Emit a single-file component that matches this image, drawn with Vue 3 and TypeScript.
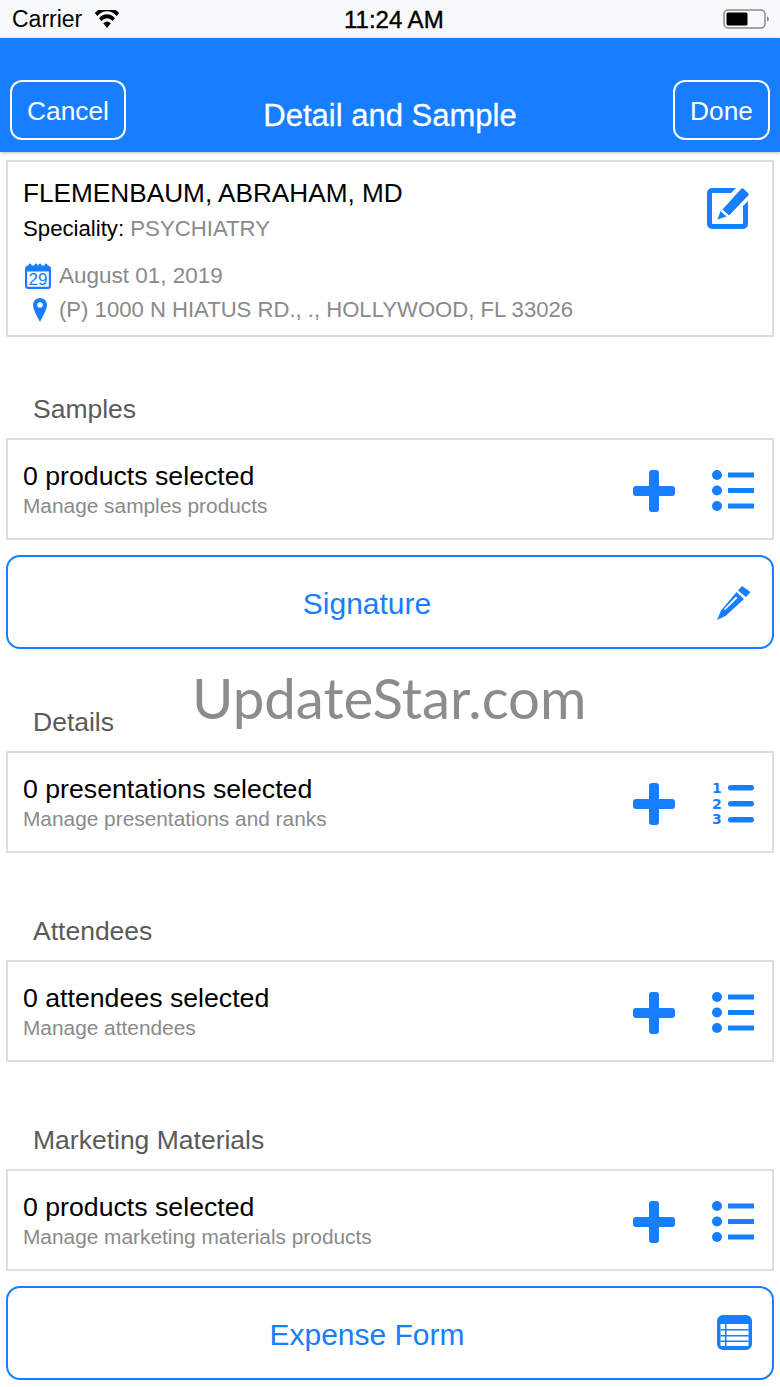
<script setup lang="ts">
interface Section {
  label: string
  title: string
  sub: string
  numbered?: boolean
  action?: 'sign' | 'table'
  actionLabel?: string
}

const sections: Section[] = [
  { label: 'Samples', title: '0 products selected', sub: 'Manage samples products', action: 'sign', actionLabel: 'Signature' },
  { label: 'Details', title: '0 presentations selected', sub: 'Manage presentations and ranks', numbered: true },
  { label: 'Attendees', title: '0 attendees selected', sub: 'Manage attendees' },
  { label: 'Marketing Materials', title: '0 products selected', sub: 'Manage marketing materials products', action: 'table', actionLabel: 'Expense Form' }
]
</script>

<template>
  <div class="page">
    <div class="status">
      <div class="status-left">
        <span>Carrier</span>
        <svg class="wifi" viewBox="0 0 26 15" width="26" height="18" preserveAspectRatio="none">
          <path d="M13 15 9.200 11.100a5.400 5.400 0 0 1 7.600 0Z" />
          <path d="M7.400 9.200 5 6.800a11.300 11.300 0 0 1 16 0l-2.400 2.400a7.900 7.900 0 0 0-11.200 0Z" />
          <path d="M3.300 5.100.8 2.600a17.300 17.300 0 0 1 24.400 0l-2.500 2.500a13.800 13.800 0 0 0-19.400 0Z" />
        </svg>
      </div>
      <span class="clock">11:24 AM</span>
      <svg class="battery" viewBox="0 0 46 20" width="46" height="20">
        <rect x="1" y="1" width="41" height="18" rx="4" fill="none" stroke="#8a8a8a" stroke-width="1.500" />
        <rect x="3.500" y="3.500" width="21" height="13" rx="1.500" fill="#000" />
        <path d="M44 7.500c1.300.4 2 1.400 2 2.500s-.7 2.100-2 2.500Z" fill="#8a8a8a" />
      </svg>
    </div>

    <header class="nav">
      <button class="nav-btn cancel">Cancel</button>
      <h1>Detail and Sample</h1>
      <button class="nav-btn done">Done</button>
    </header>

    <main class="content">
      <div class="card doctor">
        <div class="doctor-top">
          <div>
            <div class="doc-name">FLEMENBAUM, ABRAHAM, MD</div>
            <div class="doc-spec">Speciality: <span>PSYCHIATRY</span></div>
          </div>
          <svg class="edit" viewBox="0 0 42 42" width="42" height="42">
            <path d="M5 0H29L24 5H6a1 1 0 0 0-1 1V35a1 1 0 0 0 1 1H35a1 1 0 0 0 1-1V18L41 13V36a5 5 0 0 1-5 5H5a5 5 0 0 1-5-5V5a5 5 0 0 1 5-5Z" />
            <path d="M34 1a2 2 0 0 1 2.800 0L41 5a2 2 0 0 1 0 2.800L22 27.500 15.500 21.500Z" />
            <path d="M13.500 23 19.500 28.500 10.500 31.500Z" />
          </svg>
        </div>
        <div class="meta date">
          <span class="meta-icon">
            <svg viewBox="0 0 26 26" width="26" height="26">
              <path fill-rule="evenodd" d="M5 0.500a1.500 1.500 0 0 1 1.500 1.500v.5h3V2a1.500 1.500 0 0 1 3 0v.5h1V2a1.500 1.500 0 0 1 3 0v.5h3V2a1.500 1.500 0 0 1 3 0v.6A3 3 0 0 1 26 5.500v17.500a3 3 0 0 1-3 3H3a3 3 0 0 1-3-3V5.500a3 3 0 0 1 3.500-2.900V2A1.500 1.500 0 0 1 5 .5ZM2.200 8.500v15.300h21.600V8.500Z" />
              <text x="13" y="22" text-anchor="middle" class="cal-num">29</text>
            </svg>
          </span>
          <span>August 01, 2019</span>
        </div>
        <div class="meta addr">
          <span class="meta-icon">
            <svg class="pin" viewBox="0 0 14 24" width="14" height="24">
              <path fill-rule="evenodd" d="M7 0a7 7 0 0 1 7 7c0 4-4 11-7 17C4 18 0 11 0 7a7 7 0 0 1 7-7Zm0 4.200a2.800 2.800 0 1 0 0 5.600 2.800 2.800 0 0 0 0-5.600Z" />
            </svg>
          </span>
          <span>(P) 1000 N HIATUS RD., ., HOLLYWOOD, FL 33026</span>
        </div>
      </div>

      <section v-for="s in sections" :key="s.label" class="section">
        <div class="label">{{ s.label }}</div>
        <div class="card row">
          <div class="row-text">
            <div class="row-title">{{ s.title }}</div>
            <div class="row-sub">{{ s.sub }}</div>
          </div>
          <svg class="plus" viewBox="0 0 42 42" width="42" height="42">
            <path d="M16 3a3 3 0 0 1 3-3h4a3 3 0 0 1 3 3v13h13a3 3 0 0 1 3 3v4a3 3 0 0 1-3 3H26v13a3 3 0 0 1-3 3h-4a3 3 0 0 1-3-3V26H3a3 3 0 0 1-3-3v-4a3 3 0 0 1 3-3h13Z" />
          </svg>
          <svg v-if="s.numbered" class="list" viewBox="0 0 42 42" width="42" height="42">
            <text x="0" y="10" class="digit">1</text>
            <text x="0" y="26" class="digit">2</text>
            <text x="0" y="41" class="digit">3</text>
            <rect x="16" y="2" width="26" height="5.500" rx="2.700" />
            <rect x="16" y="18" width="26" height="5.500" rx="2.700" />
            <rect x="16" y="34" width="26" height="5.500" rx="2.700" />
          </svg>
          <svg v-else class="list" viewBox="0 0 42 42" width="42" height="42">
            <circle cx="5" cy="5" r="5" />
            <circle cx="5" cy="20.500" r="5" />
            <circle cx="5" cy="36" r="5" />
            <rect x="16" y="2.500" width="26" height="5" />
            <rect x="16" y="18" width="26" height="5" />
            <rect x="16" y="33.500" width="26" height="5" />
          </svg>
        </div>
        <button v-if="s.action" class="action">
          <span>{{ s.actionLabel }}</span>
          <svg v-if="s.action === 'sign'" class="action-icon" viewBox="0 0 35 35" width="35" height="35">
            <path fill-rule="evenodd" d="M19.500 7 27 14 8.500 31 0 35 4 25.500ZM19 11.500 7 24l1 1L20.500 13Z" />
            <path d="M25 1 33.500 7 29 12 21 5.500Z" />
          </svg>
          <svg v-else class="action-icon table" viewBox="0 0 35 35" width="35" height="35">
            <path fill-rule="evenodd" d="M6 0h23a6 6 0 0 1 6 6v23a6 6 0 0 1-6 6H6a6 6 0 0 1-6-6V6a6 6 0 0 1 6-6ZM3.500 9v22h28V9Z" />
            <path d="M3.500 14h28v1.500H3.500ZM3.500 20h28v1.500H3.500ZM3.500 25.500h28V27H3.500ZM8 9h1.500v22H8Z" />
          </svg>
        </button>
      </section>
    </main>

    <div class="watermark">UpdateStar.com</div>
  </div>
</template>

<style scoped>
.page {
  position: relative;
  width: 780px;
  height: 1387px;
  overflow: hidden;
  background: #fff;
  font-family: "Liberation Sans", Arial, sans-serif;
  color: #000;
}

.status {
  height: 38px;
  padding: 0 11px 0 12px;
  box-sizing: border-box;
  display: flex;
  align-items: center;
  justify-content: space-between;
  background: #f8f9fb;
  font-size: 23px;
  position: relative;
}

.status-left {
  display: flex;
  align-items: center;
  gap: 12px;
}

.clock {
  position: absolute;
  left: 344px;
  top: 6px;
  font-size: 24px;
  font-weight: 500;
  -webkit-text-stroke: 0.4px #000;
}

.nav {
  height: 114px;
  box-sizing: border-box;
  background: #177eff;
  box-shadow: 0 1px 3px rgba(0, 0, 0, 0.25);
  position: relative;
  display: flex;
  justify-content: space-between;
  align-items: flex-start;
  padding: 42px 10px 0;
}

.nav h1 {
  position: absolute;
  left: 0;
  right: 0;
  top: 61px;
  margin: 0;
  text-align: center;
  font-size: 31px;
  line-height: 34px;
  font-weight: 500;
  color: #fff;
  -webkit-text-stroke: 0.3px #fff;
}

.nav-btn {
  height: 60px;
  box-sizing: border-box;
  border: 2px solid #fff;
  border-radius: 12px;
  background: transparent;
  color: #fff;
  font-family: inherit;
  font-size: 26.300px;
  padding: 3px 0 0;
}

.cancel {
  width: 116px;
}

.done {
  width: 97px;
}

.content {
  padding: 8px 6px 0;
}

.card {
  box-sizing: border-box;
  border: 2px solid #dedede;
  background: #fff;
}

.doctor {
  height: 177px;
  padding: 15px 15px 0;
}

.doctor-top {
  display: flex;
  justify-content: space-between;
  align-items: flex-start;
  height: 82px;
}

.doc-name {
  font-size: 26.200px;
  line-height: 32px;
}

.doc-spec {
  margin-top: 6px;
  font-size: 22.200px;
  line-height: 28px;
}

.doc-spec span,
.meta {
  color: #8a8a8a;
}

.edit {
  margin: 11px 8px 0 0;
}

.edit path,
.meta-icon svg,
.plus,
.list,
.action-icon {
  fill: #177eff;
}

.meta {
  display: flex;
  align-items: center;
  height: 34px;
}

.date {
  font-size: 22.500px;
}

.addr {
  font-size: 22.100px;
}

.meta-icon {
  width: 36px;
  flex: none;
  display: flex;
  justify-content: center;
  padding-right: 6px;
  box-sizing: border-box;
}

.pin {
  margin-left: 3px;
}

.cal-num {
  font-family: "Liberation Sans", Arial, sans-serif;
  font-size: 17px;
  fill: #177eff;
}

.section .label {
  height: 30px;
  line-height: 30px;
  padding-left: 27px;
  font-size: 26.500px;
  color: #5a5a5a;
  margin-top: 63px;
  margin-bottom: 14px;
}

.section:has(.action) + .section .label {
  margin-top: 58px;
}

.section:first-of-type .label {
  margin-top: 57px;
}

.row {
  height: 102px;
  display: flex;
  align-items: center;
  padding: 0 18px 0 15px;
}

.row-text {
  flex: 1;
  padding-top: 2px;
}

.row-title {
  font-size: 26.700px;
  line-height: 30px;
}

.row-sub {
  font-size: 20.850px;
  line-height: 26px;
  margin-top: 2px;
  color: #8a8a8a;
}

.plus {
  margin: 4px 37px 0 0;
}

.list {
  margin-top: 4px;
  overflow: visible;
}

.digit {
  font-family: "DejaVu Sans", sans-serif;
  font-weight: 700;
  font-size: 14px;
  fill: #177eff;
}

.action {
  position: relative;
  display: flex;
  align-items: center;
  justify-content: center;
  width: 100%;
  height: 94px;
  margin-top: 15px;
  background: #fff;
  border: 2px solid #177eff;
  border-radius: 14px;
  color: #177eff;
  font-family: inherit;
  font-size: 30px;
  padding: 3px 46px 0 0;
}

.action-icon {
  position: absolute;
  right: 20px;
  top: 28px;
}

.action-icon.table {
  top: 27px;
}

.watermark {
  position: absolute;
  left: 192px;
  top: 659px;
  font-family: Lato, sans-serif;
  font-size: 56.400px;
  line-height: 76px;
  color: #8c8c8c;
  font-weight: 400;
  white-space: nowrap;
}
</style>
